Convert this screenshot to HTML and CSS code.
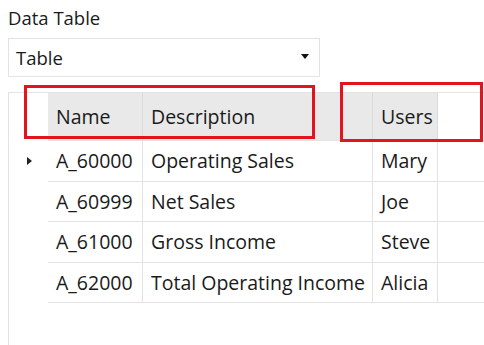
FILE: index.html
```html
<!DOCTYPE html>
<html>
<head>
<meta charset="utf-8">
<link rel="stylesheet" href="styles.css">
</head>
<body>
<div class="page">
  <div class="label">Data Table</div>
  <div class="select">
    <span class="select-text">Table</span>
    <svg class="caret" width="8" height="5" viewBox="0 0 8 5"><path d="M0 0H8L4 5Z" fill="#111"/></svg>
  </div>
  <div class="grid">
    <div class="row head">
      <div class="rh"></div>
      <div class="c c-name hc">Name</div>
      <div class="c c-desc hc">Description</div>
      <div class="c c-user hc">Users</div>
      <div class="c c-fill"></div>
    </div>
    <div class="row">
      <div class="rh"><svg width="5" height="8" viewBox="0 0 5 8"><path d="M0 0L5 4L0 8Z" fill="#222"/></svg></div>
      <div class="c c-name">A_60000</div>
      <div class="c c-desc">Operating Sales</div>
      <div class="c c-user">Mary</div>
      <div class="c c-fill"></div>
    </div>
    <div class="row">
      <div class="rh"></div>
      <div class="c c-name">A_60999</div>
      <div class="c c-desc">Net Sales</div>
      <div class="c c-user">Joe</div>
      <div class="c c-fill"></div>
    </div>
    <div class="row">
      <div class="rh"></div>
      <div class="c c-name">A_61000</div>
      <div class="c c-desc">Gross Income</div>
      <div class="c c-user">Steve</div>
      <div class="c c-fill"></div>
    </div>
    <div class="row">
      <div class="rh"></div>
      <div class="c c-name">A_62000</div>
      <div class="c c-desc">Total Operating Income</div>
      <div class="c c-user">Alicia</div>
      <div class="c c-fill"></div>
    </div>
  </div>
  <div class="mark mark-1"></div>
  <div class="mark mark-2"></div>
</div>
</body>
</html>
```
FILE: styles.css
```css
html, body {
  margin: 0;
  padding: 0;
  background: #fff;
}
.page {
  position: relative;
  width: 484px;
  height: 345px;
  overflow: hidden;
  font-family: "Open Sans", "Noto Sans", sans-serif;
  font-size: 19.5px;
  color: #1a1a1a;
}
.label {
  padding: 5px 0 0 8px;
  height: 28px;
  line-height: 26px;
  font-size: 18.5px;
}
.select {
  margin: 5px 0 0 8px;
  width: 293px;
  height: 37px;
  border: 1px solid #e3e3e3;
  display: flex;
  align-items: center;
  justify-content: space-between;
  padding: 0 10px 0 7px;
  box-sizing: content-box;
  font-size: 18.5px;
}
.caret {
  margin-top: -2px;
}
.grid {
  margin: 15px 0 0 8px;
  height: 260px;
  border-left: 1px solid #e3e3e3;
  border-top: 1px solid #e3e3e3;
}
.row {
  display: flex;
  height: 40.6px;
}
.row.head {
  height: 48px;
}
.rh {
  width: 38px;
  flex: none;
  display: flex;
  align-items: center;
  justify-content: center;
  padding-left: 1px;
}
.c {
  flex: none;
  display: flex;
  align-items: center;
  padding-left: 8px;
  box-sizing: border-box;
  border-right: 1px solid #e3e3e3;
  border-bottom: 1px solid #e3e3e3;
  white-space: nowrap;
}
.c-name { width: 95px; }
.c-desc { width: 230px; }
.c-user { width: 65px; }
.c-fill { flex: 1; border-right: none; }
.hc {
  background: #e9e9e9;
  border-right-color: #dadada;
}
.mark {
  position: absolute;
  border: 3px solid #e3141e;
  box-sizing: border-box;
}
.mark-1 {
  left: 24px;
  top: 85px;
  width: 291px;
  height: 54px;
}
.mark-2 {
  left: 340px;
  top: 82px;
  width: 143px;
  height: 60px;
}
```
